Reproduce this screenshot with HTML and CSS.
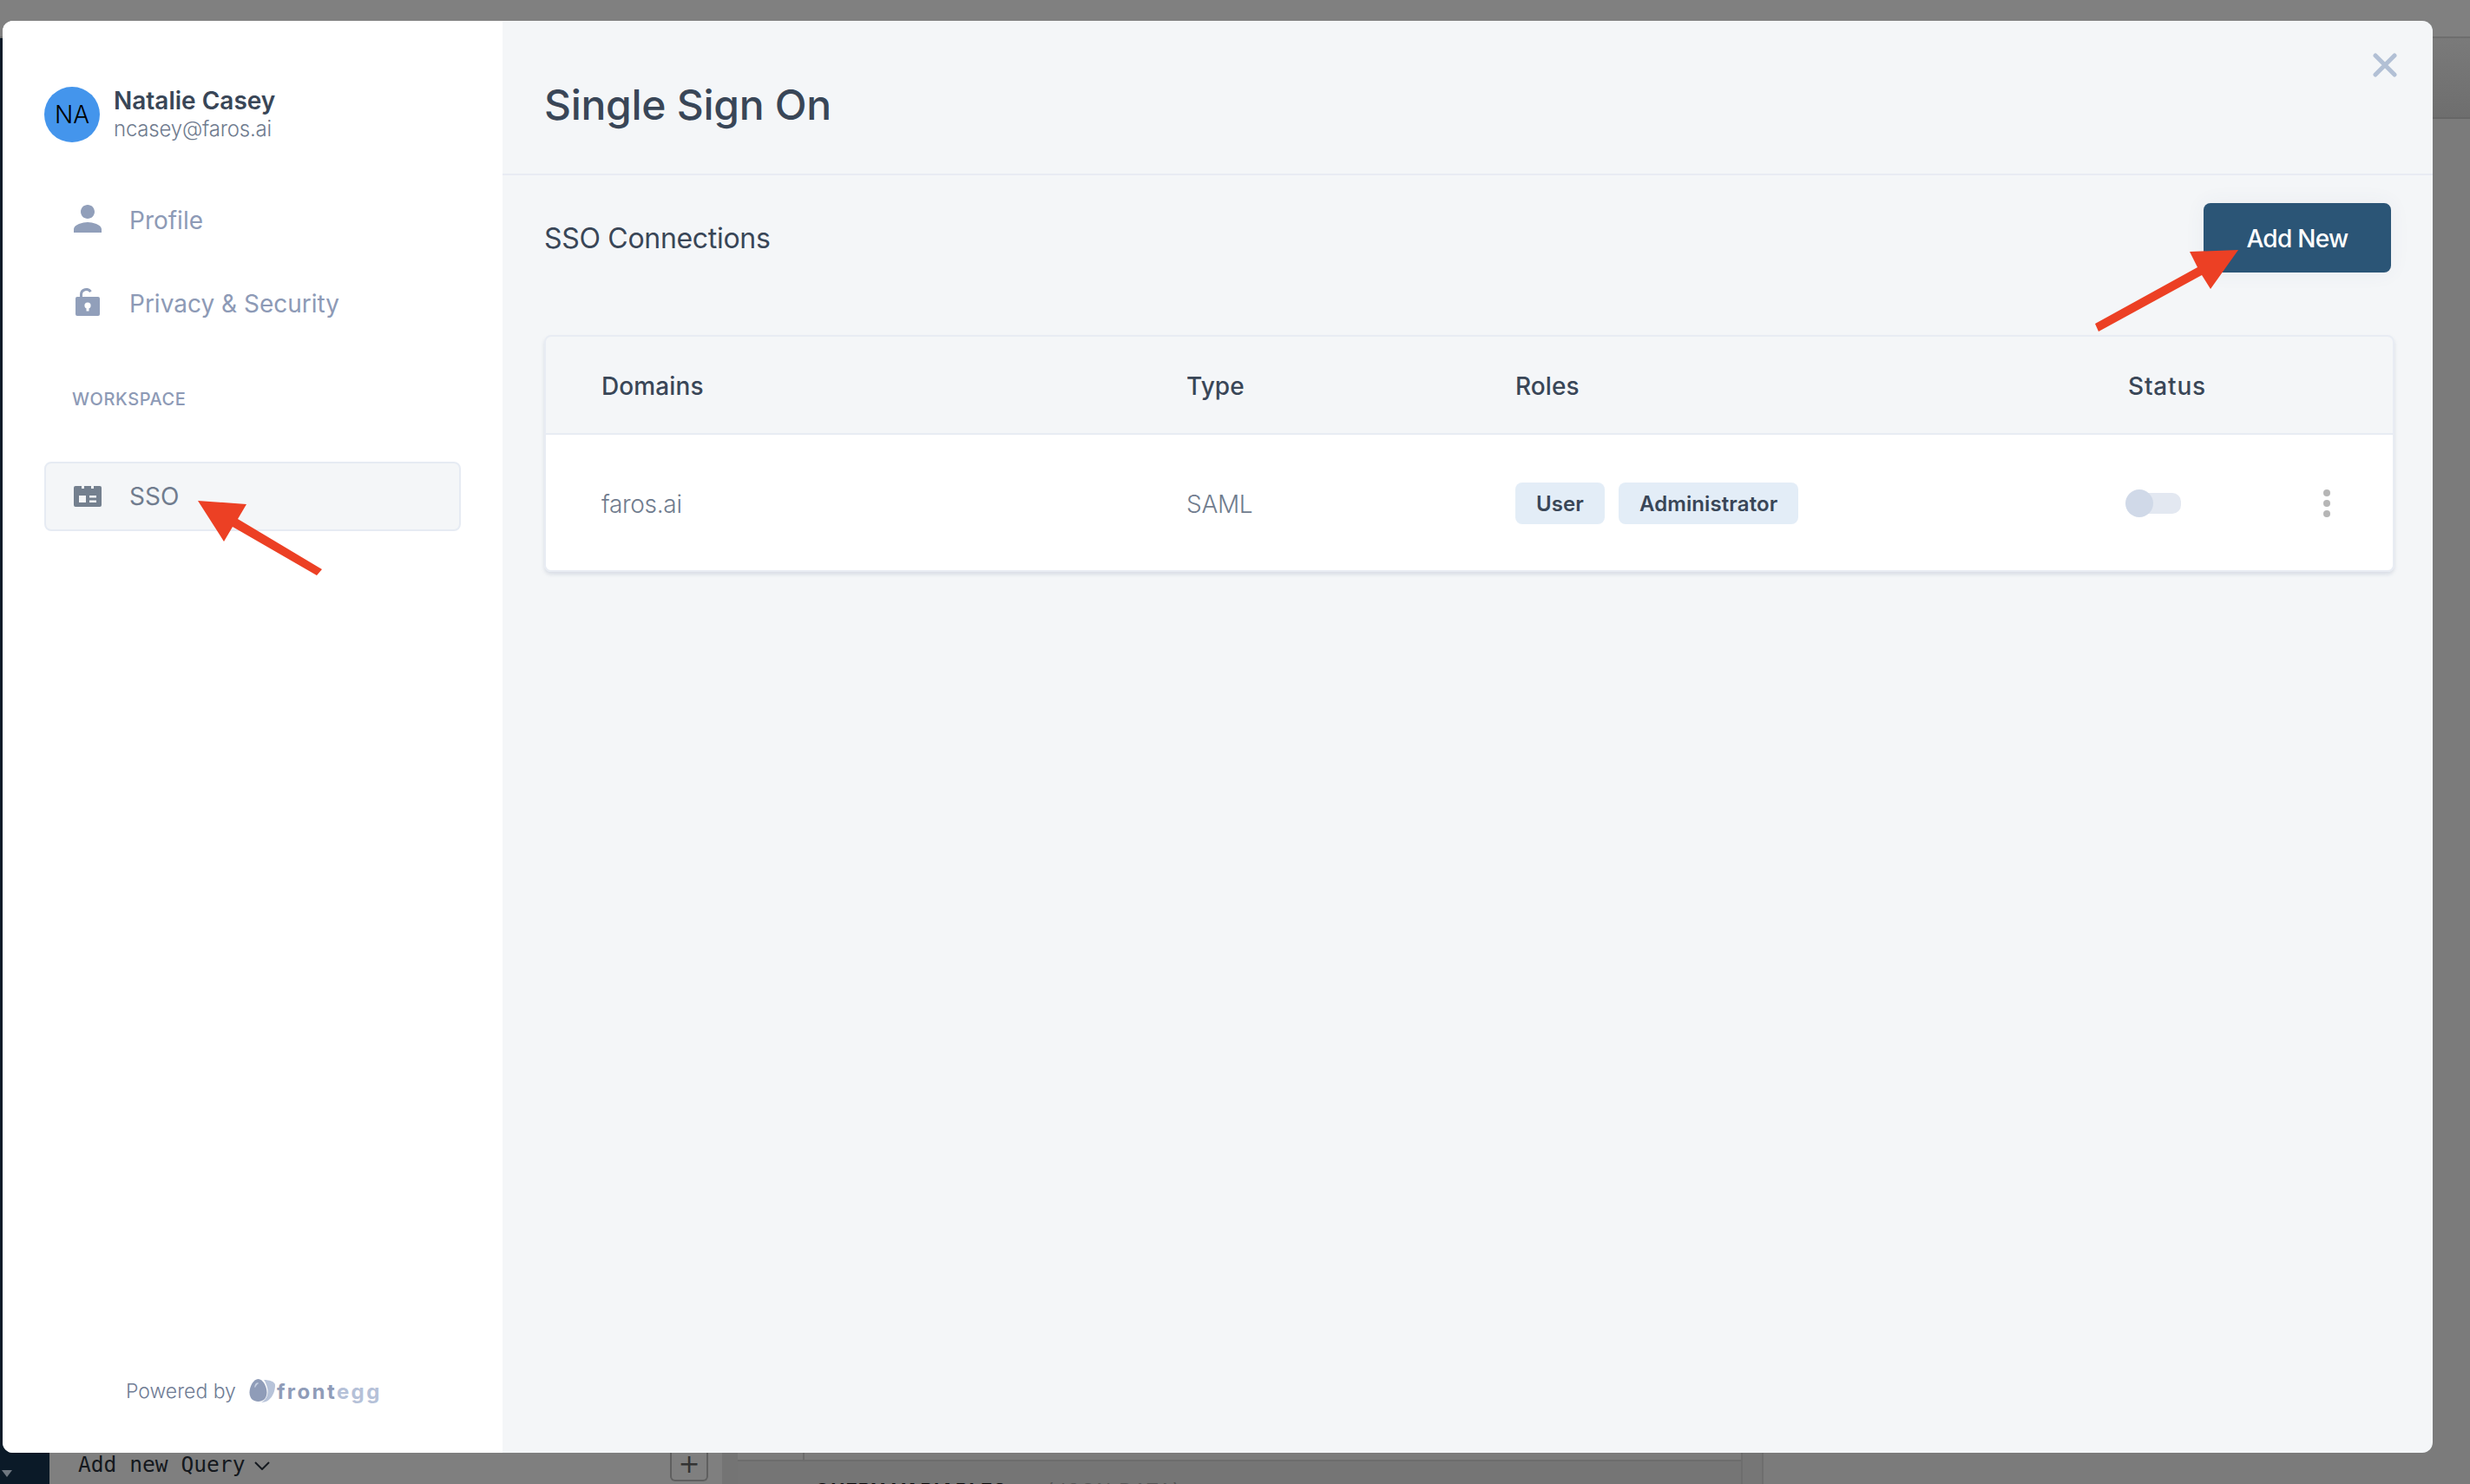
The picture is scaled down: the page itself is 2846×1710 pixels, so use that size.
FILE: index.html
```html
<!DOCTYPE html>
<html lang="en">
<head>
<meta charset="utf-8">
<title>Single Sign On</title>
<link rel="stylesheet" href="styles.css">
</head>
<body>
<div class="app">
  <div class="topbar"></div>
  <div class="app-body">
    <div class="rail"><span class="rail-caret"></span></div>
    <div class="queries">
      <div class="query-bar">
        <span class="add-query">Add new Query</span>
        <svg class="chev" viewBox="0 0 18 10"><path d="M1 1l8 8 8-8" fill="none" stroke="#151a20" stroke-width="2"/></svg>
        <span class="plus-btn">+</span>
      </div>
    </div>
    <div class="gutter"></div>
    <div class="vars">
      <div class="vars-top"><div class="vars-left"></div></div>
      <div class="vars-title"><span class="vars-strong">QUERY VARIABLES</span><span class="vars-dim">(JSON DATA)</span></div>
    </div>
    <div class="split"></div>
    <div class="right-pane">
      <div class="rp-b"></div>
      <div class="rp-c"></div>
    </div>
  </div>
</div>

<div class="modal">
  <aside class="side">
    <div class="user">
      <div class="avatar">NA</div>
      <div class="user-text">
        <div class="user-name">Natalie Casey</div>
        <div class="user-mail">ncasey@faros.ai</div>
      </div>
    </div>
    <nav class="nav">
      <a class="nav-item">
        <svg class="nav-icon" viewBox="4 4 16 16"><path fill="#919fba" d="M12 12c2.21 0 4-1.79 4-4s-1.79-4-4-4-4 1.79-4 4 1.79 4 4 4zm0 2c-2.67 0-8 1.34-8 4v2h16v-2c0-2.66-5.33-4-8-4z"/></svg>
        <span class="nav-label">Profile</span>
      </a>
      <a class="nav-item">
        <svg class="nav-icon" viewBox="0 0 32 32"><path fill="none" stroke="#919fba" stroke-width="3" d="M8.500 11V7.500a6 6 0 0 1 11-3.300"/><rect x="2" y="10" width="28" height="22" rx="2" fill="#919fba"/><circle cx="16" cy="20" r="3.600" fill="#fff"/><rect x="14.500" y="21" width="3" height="5.500" fill="#fff"/></svg>
        <span class="nav-label">Privacy &amp; Security</span>
      </a>
    </nav>
    <div class="nav-head">WORKSPACE</div>
    <a class="nav-active">
      <svg class="sso-icon" viewBox="0 0 32 24"><path fill="#74808f" d="M2 0h7v3h3V0h8v3h3V0h7a2 2 0 0 1 2 2v20a2 2 0 0 1-2 2H2a2 2 0 0 1-2-2V2a2 2 0 0 1 2-2z"/><rect x="6" y="11" width="8" height="8" fill="#f4f6f8"/><rect x="18" y="11" width="8" height="2.500" fill="#f4f6f8"/><rect x="18" y="16.500" width="8" height="2.500" fill="#f4f6f8"/></svg>
      <span>SSO</span>
    </a>
    <div class="powered">
      <span class="powered-by">Powered by</span>
      <svg class="egg" viewBox="0 0 32 28"><path fill="#b7c3d9" d="M17 1c6 0 13 2 13 6 0 9-5 20-16 20 8-4 9-13 6-20-1-3-2-5-3-6z"/><path fill="#8f9cb8" d="M10.500 0c5.500 0 10 9 10 15.500 0 7-4.500 10.500-10 10.500S0.500 22.500 0.500 15.500C0.500 9 5 0 10.500 0z"/><path fill="#c5cfe0" d="M8 5c1-1 3-1 3 0-2 1-3 3-4 5-1 0-1-3 1-5z"/></svg>
      <span class="brand"><span class="brand-a">front</span><span class="brand-b">egg</span></span>
    </div>
  </aside>
  <main class="main">
    <header class="main-head">
      <h1 class="title">Single Sign On</h1>
      <svg class="close" viewBox="0 0 28 28"><path d="M3 3l22 22M25 3L3 25" fill="none" stroke="#b2c0d5" stroke-width="5" stroke-linecap="round"/></svg>
    </header>
    <section class="content">
      <div class="content-head">
        <h2 class="subtitle">SSO Connections</h2>
        <button class="add-btn">Add New</button>
      </div>
      <div class="table">
        <div class="row row-head">
          <div>Domains</div>
          <div>Type</div>
          <div>Roles</div>
          <div class="col-status">Status</div>
          <div></div>
        </div>
        <div class="row row-body">
          <div class="cell-text">faros.ai</div>
          <div class="cell-text">SAML</div>
          <div class="tags"><span class="tag">User</span><span class="tag">Administrator</span></div>
          <div><span class="toggle"><span class="toggle-track"></span><span class="toggle-knob"></span></span></div>
          <div class="kebab"><i></i><i></i><i></i></div>
        </div>
      </div>
    </section>
  </main>
</div>

<svg class="arrows" viewBox="0 0 2846 1710">
  <polygon fill="#ec4024" points="228,577 284,581 274,598 371,656 365,663 268,607 258,624"/>
  <polygon fill="#ec4024" points="2579,288 2523,290 2532,308 2414,373 2418,382 2537,317 2547,333"/>
</svg>
</body>
</html>
```

FILE: styles.css
```css
* { box-sizing: border-box; }
html, body { margin: 0; padding: 0; }
body {
  width: 2846px;
  height: 1710px;
  overflow: hidden;
  position: relative;
  font-family: Inter, "Liberation Sans", sans-serif;
  background: #7d7d7d;
}

/* dimmed application behind the dialog */
.app { display: flex; flex-direction: column; height: 1710px; background: #7e7e7e; }
.topbar { height: 44px; flex: none; background: #808080; border-bottom: 2px solid #6e6e6e; }
.app-body { flex: 1; min-height: 0; display: flex; }
.rail { width: 57px; flex: none; background: #0b1a28; display: flex; align-items: flex-end; padding: 0 0 8px 2px; }
.rail-caret { width: 0; height: 0; border-left: 6px solid transparent; border-right: 6px solid transparent; border-top: 8px solid #6f7780; }
.queries { width: 775px; flex: none; display: flex; flex-direction: column; justify-content: flex-end; background: #7f7f7f; }
.query-bar { height: 36px; display: flex; align-items: flex-start; padding: 0 16px 0 33px; }
.add-query { font: 24.600px/30px "DejaVu Sans Mono", monospace; color: #14181d; margin-top: -1px; white-space: pre; }
.chev { width: 18px; height: 10px; margin: 10px 0 0 10px; }
.plus-btn { width: 44px; height: 33px; margin-left: auto; border: 2px solid #5f5f5f; border-top: 0; border-radius: 0 0 6px 6px; font: 30px/26px "DejaVu Sans", sans-serif; color: #333; text-align: center; }
.gutter { width: 18px; flex: none; background: #747474; }
.vars { width: 1156px; flex: none; display: flex; flex-direction: column; background: #757575; }
.vars-top { height: 1640px; flex: none; border-bottom: 2px solid #6c6c6c; background: #7c7c7c; display: flex; }
.vars-left { width: 77px; border-right: 2px solid #6c6c6c; }
.vars-title { padding: 20px 0 0 89px; display: flex; gap: 46px; font-size: 22px; line-height: 26px; white-space: nowrap; height: 26px; overflow: hidden; }
.vars-strong { font-weight: 700; color: #0d0d0d; letter-spacing: 1.100px; }
.vars-dim { color: #555; letter-spacing: 1.500px; }
.split { width: 26px; flex: none; background: #767676; border-left: 2px solid #6e6e6e; border-right: 2px solid #6e6e6e; }
.right-pane { flex: 1; display: flex; flex-direction: column; background: #7b7b7b; }
.rp-b { height: 93px; background: linear-gradient(#7a7a7a, #6e6e6e); border-bottom: 2px solid #666; flex: none; }
.rp-c { flex: 1; }

/* dialog */
.modal {
  position: absolute;
  left: 3px;
  top: 24px;
  width: 2800px;
  height: 1650px;
  border-radius: 12px;
  overflow: hidden;
  display: flex;
  background: #f4f6f8;
}
.side { width: 576px; flex: none; background: #fff; padding: 76px 48px 0 48px; display: flex; flex-direction: column; }
.user { display: flex; align-items: center; gap: 16px; height: 64px; }
.avatar { width: 64px; height: 64px; border-radius: 50%; background: #4495ec; color: #000; font-size: 28px; font-weight: 300; line-height: 64px; text-align: center; flex: none; }
.user-name { font-size: 28px; line-height: 34px; font-weight: 600; color: #394657; letter-spacing: 0; }
.user-mail { font-size: 24px; line-height: 32px; font-weight: 300; color: #6f7b8e; letter-spacing: -.2px; }
.nav { display: flex; flex-direction: column; gap: 64px; margin-top: 72px; padding-left: 34px; }
.nav-item { display: flex; align-items: center; gap: 32px; height: 32px; font-size: 28px; line-height: 32px; color: #8d9ab6; }
.nav-label { padding-top: 4px; }
.nav-icon { width: 32px; height: 32px; flex: none; }
.nav-head { margin: 84px 0 0 32px; font-size: 20px; line-height: 24px; font-weight: 500; color: #8d9ab6; letter-spacing: .6px; }
.nav-active { margin-top: 60px; height: 80px; border: 2px solid #e6ebf3; border-radius: 8px; background: #f4f6f8; display: flex; align-items: center; gap: 32px; padding-left: 32px; font-size: 28px; color: #707c8e; }
.sso-icon { width: 32px; height: 24px; flex: none; }
.powered { margin-top: auto; margin-bottom: 56px; display: flex; align-items: center; padding-left: 94px; height: 30px; }
.powered-by { font-size: 23px; font-weight: 300; color: #6f7c94; letter-spacing: 0; white-space: nowrap; }
.egg { width: 32px; height: 28px; margin-left: 15px; flex: none; }
.brand { font-size: 24px; font-weight: 700; letter-spacing: 2.400px; margin-left: 0; }
.brand-a { color: #8f9cb8; }
.brand-b { color: #b5c1d8; }

.main { flex: 1; min-width: 0; display: flex; flex-direction: column; position: relative; }
.main-head { height: 178px; flex: none; border-bottom: 2px solid #e8ebf3; padding: 65px 0 0 48px; }
.title { margin: 0; font-size: 48px; line-height: 64px; font-weight: 500; color: #394657; letter-spacing: -.3px; }
.close { position: absolute; top: 37px; right: 41px; width: 28px; height: 28px; }
.content { padding: 32px 44px 0 48px; }
.content-head { display: flex; align-items: center; justify-content: space-between; height: 80px; padding-right: 4px; }
.subtitle { margin: 2px 0 0; font-size: 32px; line-height: 40px; font-weight: 400; color: #394657; letter-spacing: -.3px; }
.add-btn { width: 216px; height: 80px; border: 0; border-radius: 8px; background: #2b5576; color: #fff; font: 500 28px Inter, sans-serif; letter-spacing: -.7px; box-shadow: 0 0 24px rgba(60,80,120,.06); padding: 2px 0 0; }
.table { margin-top: 72px; border: 2px solid #e8ecf3; border-radius: 8px; overflow: hidden; box-shadow: 0 3px 4px rgba(110,125,155,.2); }
.row { display: grid; grid-template-columns: 674px 379px 706px 1fr auto; align-items: center; padding: 0 72px 0 64px; font-size: 28px; }
.row-head { height: 113px; padding-top: 2px; border-bottom: 2px solid #e8ecf3; font-weight: 500; color: #394657; letter-spacing: .1px; }
.col-status { letter-spacing: .8px; }
.row-body { height: 156px; padding-top: 2px; background: #fff; color: #707c8e; font-weight: 300; letter-spacing: -.3px; }
.cell-text { padding-top: 2px; }
.tags { display: flex; gap: 16px; }
.tag { height: 48px; padding: 0 24px; border-radius: 8px; background: #e3edf7; color: #394657; font-size: 24px; font-weight: 600; line-height: 49px; letter-spacing: .1px; }
.toggle { display: block; position: relative; width: 64px; height: 32px; margin-left: -3px; }
.toggle-track { position: absolute; left: 8px; right: 0; top: 4px; bottom: 4px; border-radius: 10px; background: #e3e8f1; }
.toggle-knob { position: absolute; left: 0; top: 0; width: 32px; height: 32px; border-radius: 50%; background: #d0d9e8; }
.kebab { display: flex; flex-direction: column; gap: 4px; }
.kebab i { display: block; width: 8px; height: 8px; border-radius: 50%; background: #b6b6b6; }

.arrows { position: absolute; left: 0; top: 0; width: 2846px; height: 1710px; pointer-events: none; }
```
